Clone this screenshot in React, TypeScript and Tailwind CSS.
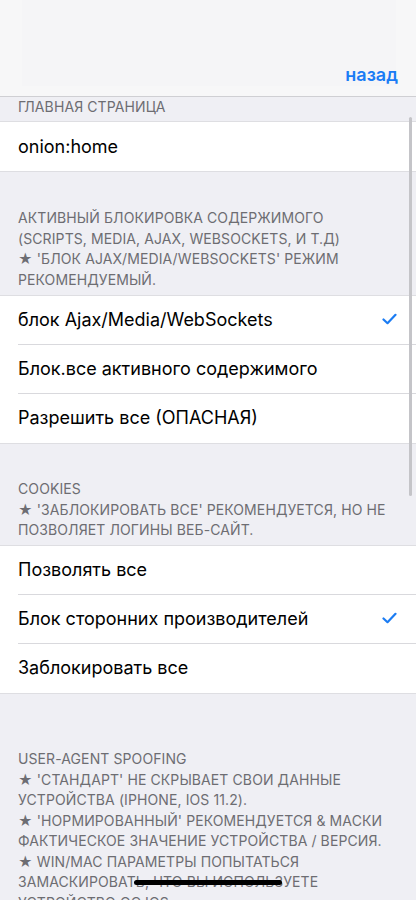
import React from "react";

const font = { fontFamily: "Inter, 'Noto Sans', sans-serif" };

function Check() {
  return (
    <svg width="15" height="12" viewBox="0 0 15 12" fill="none">
      <path d="M1.5 6.5 L5.5 10.2 L13.5 1.8" stroke="#1b7cf3" strokeWidth="2.2" strokeLinecap="round" strokeLinejoin="round" />
    </svg>
  );
}

function Row({ label, checked, last }: { label: string; checked?: boolean; last?: boolean }) {
  return (
    <div className="pl-[18px]">
      <div className={`h-[49px] flex items-center justify-between pr-[19px] pb-[2px] ${last ? "" : "border-b border-[#d9d9dd]"}`}>
        <span className="text-[18px] text-black">{label}</span>
        {checked && <Check />}
      </div>
    </div>
  );
}

function Group({ children }: { children: React.ReactNode }) {
  return <div className="bg-white border-y border-[#dedee2]">{children}</div>;
}

function Note({ lines, pt, pb }: { lines: string[]; pt: string; pb: string }) {
  return (
    <div className={`${pt} ${pb} px-[18px] text-[14px] leading-[20.5px] text-[#6d6d72] tracking-[0.1px]`}>
      {lines.map((l, i) => (
        <div key={i} className="whitespace-nowrap">{l}</div>
      ))}
    </div>
  );
}

export default function App() {
  return (
    <div style={font} className="relative w-[416px] h-[900px] overflow-hidden bg-[#efeff4]">
      <div className="h-[97px] bg-[#f7f7f8] border-b border-[#cfcfd3] relative">
        <div className="absolute left-[22px] right-[20px] top-0 h-[86px] bg-[#f5f5f7]" />
        <div className="relative h-full flex items-end justify-end pr-[18px] pb-[8px]">
          <span className="text-[18px] font-semibold text-[#1a7cf5]">назад</span>
        </div>
      </div>
      <div className="h-[24px] overflow-hidden px-[18px] text-[14px] leading-[20px] text-[#6d6d72] tracking-[0.1px]">
        <div>ГЛАВНАЯ СТРАНИЦА</div>
      </div>
      <Group>
        <div className="h-[49px] flex items-center pl-[18px]">
          <span className="text-[18px] text-black">onion:home</span>
        </div>
      </Group>
      <Note
        pt="pt-[36px]"
        pb="pb-[5px]"
        lines={[
          "АКТИВНЫЙ БЛОКИРОВКА СОДЕРЖИМОГО",
          "(SCRIPTS, MEDIA, AJAX, WEBSOCKETS, И Т.Д)",
          "★ 'БЛОК AJAX/MEDIA/WEBSOCKETS' РЕЖИМ",
          "РЕКОМЕНДУЕМЫЙ.",
        ]}
      />
      <Group>
        <Row label="блок Ajax/Media/WebSockets" checked />
        <Row label="Блок.все активного содержимого" />
        <Row label="Разрешить все (ОПАСНАЯ)" last />
      </Group>
      <Note
        pt="pt-[35px]"
        pb="pb-[4.5px]"
        lines={[
          "COOKIES",
          "★ 'ЗАБЛОКИРОВАТЬ ВСЕ' РЕКОМЕНДУЕТСЯ, НО НЕ",
          "ПОЗВОЛЯЕТ ЛОГИНЫ ВЕБ-САЙТ.",
        ]}
      />
      <Group>
        <Row label="Позволять все" />
        <Row label="Блок сторонних производителей" checked />
        <Row label="Заблокировать все" last />
      </Group>
      <Note
        pt="pt-[55px]"
        pb="pb-[7px]"
        lines={[
          "USER-AGENT SPOOFING",
          "★ 'СТАНДАРТ' НЕ СКРЫВАЕТ СВОИ ДАННЫЕ",
          "УСТРОЙСТВА (IPHONE, IOS 11.2).",
          "★ 'НОРМИРОВАННЫЙ' РЕКОМЕНДУЕТСЯ & МАСКИ",
          "ФАКТИЧЕСКОЕ ЗНАЧЕНИЕ УСТРОЙСТВА / ВЕРСИЯ.",
          "★ WIN/MAC ПАРАМЕТРЫ ПОПЫТАТЬСЯ",
          "ЗАМАСКИРОВАТЬ, ЧТО ВЫ ИСПОЛЬЗУЕТЕ",
          "УСТРОЙСТВО ОС IOS.",
        ]}
      />
      <div className="absolute left-[409px] top-[117px] w-[2.5px] h-[379px] rounded-full bg-[#c4c4c8]" />
      <div className="absolute left-[134px] top-[880px] w-[148px] h-[5px] rounded-full bg-black" />
    </div>
  );
}
